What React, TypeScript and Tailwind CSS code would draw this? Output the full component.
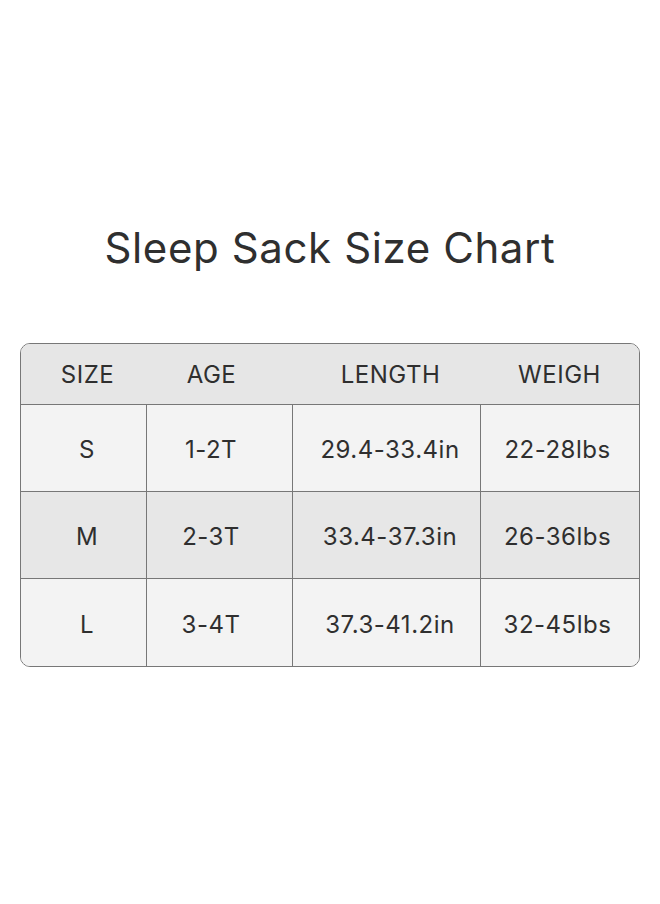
import React from 'react';

const rows = [
  { size: 'S', age: '1-2T', length: '29.4-33.4in', weight: '22-28lbs', bg: 'bg-[#f3f3f3]' },
  { size: 'M', age: '2-3T', length: '33.4-37.3in', weight: '26-36lbs', bg: 'bg-[#e7e7e7]' },
  { size: 'L', age: '3-4T', length: '37.3-41.2in', weight: '32-45lbs', bg: 'bg-[#f3f3f3]' },
];

const App: React.FC = () => {
  return (
    <div className="w-[660px] h-[904px] bg-white flex flex-col items-center text-[#2f2f2f] font-['Inter',sans-serif]">
      <h1 className="mt-[224px] h-[48px] text-[42px] leading-[48px] font-normal tracking-[0.6px]">
        Sleep Sack Size Chart
      </h1>

      {/* Size table */}
      <div className="mt-[71px] ml-[-1px] w-[620px] border border-[#777] rounded-[10px] overflow-hidden text-[24px] tracking-[0.5px]">
        <div className="flex h-[61px] items-center pt-[2px] bg-[#e6e6e6] border-b border-[#777]">
          <div className="w-[126px] text-center pl-[8px]">SIZE</div>
          <div className="w-[146px] text-center pr-[16px]">AGE</div>
          <div className="w-[188px] text-center pl-[8px]">LENGTH</div>
          <div className="flex-1 text-center">WEIGH</div>
        </div>
        {rows.map((r, i) => (
          <div
            key={r.size}
            className={`flex h-[87px] ${r.bg} ${i < rows.length - 1 ? 'border-b border-[#777]' : ''}`}
          >
            <div className="w-[126px] flex items-center justify-center pt-[4px] pl-[8px] border-r border-[#777]">{r.size}</div>
            <div className="w-[146px] flex items-center justify-center pt-[4px] pr-[16px] border-r border-[#777]">{r.age}</div>
            <div className="w-[188px] flex items-center justify-center pt-[4px] pl-[8px] border-r border-[#777]">{r.length}</div>
            <div className="flex-1 flex items-center justify-center pt-[4px] pr-[4px]">{r.weight}</div>
          </div>
        ))}
      </div>
    </div>
  );
};

export default App;
